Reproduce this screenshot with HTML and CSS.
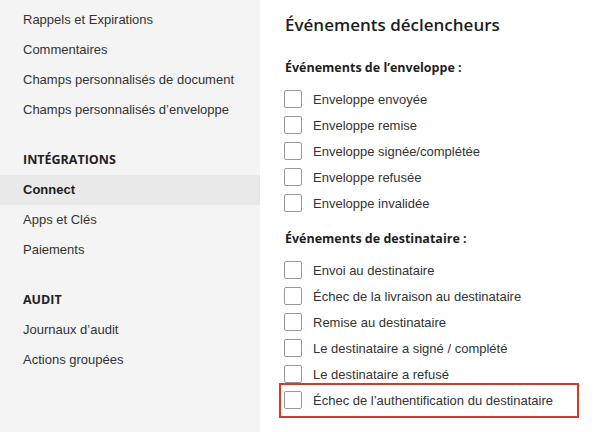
FILE: index.html
```html
<!DOCTYPE html>
<html lang="fr">
<head>
<meta charset="utf-8">
<title>Événements déclencheurs</title>
<link rel="stylesheet" href="styles.css">
</head>
<body>
<div class="page">
  <nav class="sidebar">
    <ul class="nav-group">
      <li class="nav-item">Rappels et Expirations</li>
      <li class="nav-item">Commentaires</li>
      <li class="nav-item">Champs personnalisés de document</li>
      <li class="nav-item">Champs personnalisés d’enveloppe</li>
    </ul>
    <div class="nav-title">INTÉGRATIONS</div>
    <ul class="nav-group">
      <li class="nav-item active">Connect</li>
      <li class="nav-item">Apps et Clés</li>
      <li class="nav-item">Paiements</li>
    </ul>
    <div class="nav-title">AUDIT</div>
    <ul class="nav-group">
      <li class="nav-item">Journaux d’audit</li>
      <li class="nav-item">Actions groupées</li>
    </ul>
  </nav>
  <main class="content">
    <h1 class="title">Événements déclencheurs</h1>
    <section class="group">
      <h2 class="group-title">Événements de l’enveloppe :</h2>
      <label class="check-row"><span class="box"></span><span class="label">Enveloppe envoyée</span></label>
      <label class="check-row"><span class="box"></span><span class="label">Enveloppe remise</span></label>
      <label class="check-row"><span class="box"></span><span class="label">Enveloppe signée/complétée</span></label>
      <label class="check-row"><span class="box"></span><span class="label">Enveloppe refusée</span></label>
      <label class="check-row"><span class="box"></span><span class="label">Enveloppe invalidée</span></label>
    </section>
    <section class="group">
      <h2 class="group-title">Événements de destinataire :</h2>
      <label class="check-row"><span class="box"></span><span class="label">Envoi au destinataire</span></label>
      <label class="check-row"><span class="box"></span><span class="label">Échec de la livraison au destinataire</span></label>
      <label class="check-row"><span class="box"></span><span class="label">Remise au destinataire</span></label>
      <label class="check-row"><span class="box"></span><span class="label">Le destinataire a signé / complété</span></label>
      <label class="check-row"><span class="box"></span><span class="label">Le destinataire a refusé</span></label>
      <label class="check-row highlighted"><span class="box"></span><span class="label">Échec de l’authentification du destinataire</span></label>
    </section>
  </main>
</div>
</body>
</html>
```
FILE: styles.css
```css
* { box-sizing: border-box; }
html, body { margin: 0; padding: 0; background: #ffffff; }
body {
  font-family: "Liberation Sans", Arial, sans-serif;
  color: #333333;
  font-size: 13px;
}
.page {
  display: flex;
  width: 616px;
  height: 432px;
  overflow: hidden;
}
.sidebar {
  width: 260px;
  flex: none;
  background: #f4f4f4;
  padding-top: 5px;
}
.nav-group {
  list-style: none;
  margin: 0;
  padding: 0;
}
.nav-item {
  height: 30px;
  line-height: 30px;
  padding-left: 23px;
  color: #333333;
  font-size: 13px;
}
.nav-item.active {
  background: #e9e9e9;
  font-weight: bold;
  color: #1e1e1e;
}
.nav-title {
  margin-top: 20px;
  height: 30px;
  line-height: 30px;
  padding-left: 23px;
  font-family: "Open Sans", sans-serif;
  font-weight: 700;
  font-size: 12.5px;
  color: #222222;
}
.nav-title + .nav-group { margin-top: 0; }
.content {
  flex: 1;
  padding: 12px 0 0 24px;
}
.title {
  margin: 0;
  font-family: "Open Sans", sans-serif;
  font-weight: 600;
  font-size: 17px;
  line-height: 26px;
  color: #1e1e1e;
  padding-left: 1px;
}
.group-title {
  margin: 0;
  font-family: "Open Sans", sans-serif;
  font-weight: 700;
  font-size: 12.5px;
  line-height: 20px;
  color: #1e1e1e;
  padding-left: 1px;
  margin-bottom: 8px;
}
.group { margin-top: 20px; }
.group + .group { margin-top: 13px; }
.check-row {
  display: flex;
  align-items: center;
  height: 26px;
  position: relative;
}
.box {
  width: 18px;
  height: 18px;
  border: 1px solid #999999;
  border-radius: 2px;
  background: #ffffff;
  flex: none;
}
.label {
  margin-left: 11px;
  font-size: 13px;
  color: #333333;
}
.highlighted::after {
  content: "";
  position: absolute;
  left: -5px;
  top: -4px;
  bottom: -5px;
  width: 296px;
  border: 2px solid #d9372a;
  pointer-events: none;
}
```
